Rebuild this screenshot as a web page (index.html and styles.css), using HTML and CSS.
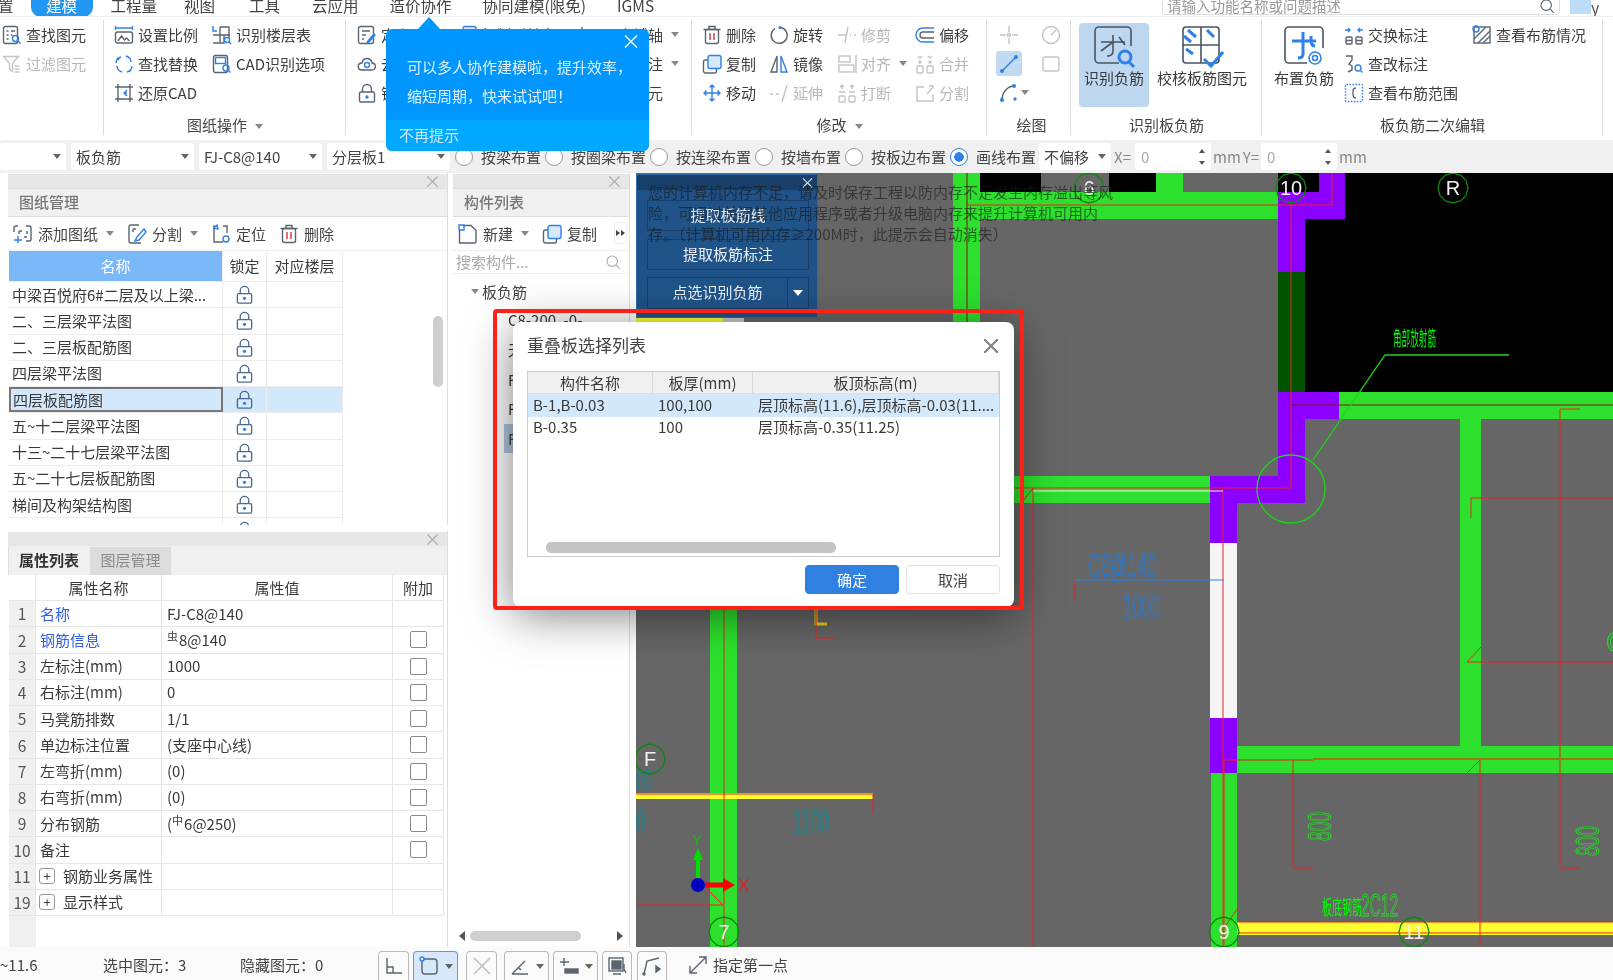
FILE: index.html
```html
<!DOCTYPE html>
<html lang="zh-CN">
<head>
<meta charset="utf-8">
<title>重叠板选择列表</title>
<link rel="stylesheet" href="styles.css">
</head>
<body>
<svg class="defs" width="0" height="0" aria-hidden="true">
  <symbol id="find" viewBox="0 0 20 20"><rect x="1.500" y="1.500" width="14" height="17" rx="2"/><path d="M4.500 6h2M9 6h4M4.500 10h2M9 10h1.500M4.500 14h2"/><circle class="bl" cx="13.500" cy="13.500" r="3"/><path class="bl" d="M16 16l2.500 2.500"/></symbol>
  <symbol id="filter" viewBox="0 0 20 20"><path d="M1.500 2.500h15l-6 7v8l-3-2v-6z"/><path d="M12.500 12h5M12.500 15h5M12.500 18h5"/></symbol>
  <symbol id="scale" viewBox="0 0 20 20"><path class="bl" d="M1.500 3h17M1.500 1v4M18.500 1v4"/><rect x="1.500" y="7" width="17" height="11" rx="2"/><path d="M4 16l3.500-5 3 4 2-2 3 3"/></symbol>
  <symbol id="floor" viewBox="0 0 20 20"><path d="M8 2h9v11M8 2v16M1 10h17M1 18h11V10"/><path class="bl" d="M1 1v5h4"/><circle class="bl" cx="15" cy="15" r="2.500"/><path class="bl" d="M17 17l2 2"/></symbol>
  <symbol id="swap" viewBox="0 0 20 20"><path class="bl" d="M3 4l2 2M2 9c0-3 2-5 5-6M12 2c3 1 5 3 5 6M3 12c0 3 2 5 5 6M13 18c3-1 5-3 5-6M17 16l-2 2"/></symbol>
  <symbol id="cad" viewBox="0 0 20 20"><rect x="1.500" y="1.500" width="14" height="17" rx="2"/><rect class="bl" x="3.500" y="3.500" width="10" height="6"/><circle class="bl" cx="14" cy="14" r="3"/><path class="bl" d="M16 16l2.500 2.500"/></symbol>
  <symbol id="crop" viewBox="0 0 20 20"><path d="M4 1v18M16 1v18M1 4h18M1 16h18"/><path class="bl" d="M13 7l-3 3 3 3M10 10h3"/></symbol>
  <symbol id="def" viewBox="0 0 20 20"><rect x="1.500" y="1.500" width="15" height="17" rx="2"/><path d="M5 6h8M5 10h4M5 14h2"/><path class="bl" d="M17 9l-6 7-1 2 2-1 6-7z"/></symbol>
  <symbol id="cloud" viewBox="0 0 20 20"><path d="M5 16c-5 0-5-7 0-7 1-6 9-6 10 0 4 0 5 7 0 7z"/><circle class="bl" cx="10" cy="11" r="2.500"/></symbol>
  <symbol id="lock" viewBox="0 0 20 20"><path d="M5.500 9V6a4.500 4.500 0 0 1 9 0v3"/><rect x="2.500" y="9" width="15" height="10" rx="1.500"/><circle class="fb" cx="10" cy="14" r="1.700"/></symbol>
  <symbol id="del" viewBox="0 0 20 20"><rect x="3.500" y="4.500" width="13" height="14" rx="2"/><path d="M1.500 4.500h17M7 4.500V1.500h6v3"/><path class="rd" d="M8 8v7M12 8v7"/></symbol>
  <symbol id="copy" viewBox="0 0 20 20"><rect x="1.500" y="6" width="13" height="13" rx="2"/><rect class="blf" x="6" y="1.500" width="13" height="13" rx="2"/></symbol>
  <symbol id="move" viewBox="0 0 20 20"><path class="bl" d="M10 2v16M2 10h16M7.500 4.500L10 2l2.500 2.500M7.500 15.500L10 18l2.500-2.500M4.500 7.500L2 10l2.500 2.500M15.500 7.500L18 10l-2.500 2.500"/></symbol>
  <symbol id="rot" viewBox="0 0 20 20"><path d="M12 2.500a8 8 0 1 1-6 1"/><circle class="fb" cx="11" cy="2.500" r="1.500"/></symbol>
  <symbol id="mir" viewBox="0 0 20 20"><path d="M8 2L2 18h6z"/><path class="bl" d="M12 2l6 16h-6z"/></symbol>
  <symbol id="ext" viewBox="0 0 20 20"><path d="M1 11h3M7 11h3M18 2l-5 17"/></symbol>
  <symbol id="trim" viewBox="0 0 20 20"><path d="M1 10h9M13 10h1M17 10h2M11 2L8 18"/></symbol>
  <symbol id="align" viewBox="0 0 20 20"><rect x="2" y="2" width="11" height="6"/><rect x="2" y="11" width="15" height="7"/><path d="M19 1v18"/></symbol>
  <symbol id="brk" viewBox="0 0 20 20"><rect x="2" y="13" width="6" height="6" rx="1"/><rect x="12" y="13" width="6" height="6" rx="1"/><path d="M2 9h6M12 9h6M5 2v4M15 2v4M3 4l2-2 2 2M13 4l2-2 2 2"/></symbol>
  <symbol id="exch" viewBox="0 0 20 20"><rect x="2" y="12" width="6" height="7" rx="1"/><rect x="12" y="12" width="6" height="7" rx="1"/><path d="M2 15.500h6M12 15.500h6"/><path class="bl" d="M1 5h5M4 3l2 2-2 2M19 5h-5M16 3l-2 2 2 2"/></symbol>
  <symbol id="off" viewBox="0 0 20 20"><path class="bl" d="M19 3H8a6.500 6.500 0 0 0 0 14h11"/><path d="M19 7H8a2.500 2.500 0 0 0 0 6h11"/></symbol>
  <symbol id="merge" viewBox="0 0 20 20"><rect x="2" y="12" width="6" height="7" rx="1"/><rect x="12" y="12" width="6" height="7" rx="1"/><circle cx="5" cy="8" r="1"/><circle cx="15" cy="8" r="1"/><path d="M3 2l2 2 2-2M13 2l2 2 2-2"/></symbol>
  <symbol id="split" viewBox="0 0 20 20"><path d="M9 4H2v14h16v-7M12 11l6-7M14 3l5 0"/></symbol>
  <symbol id="point" viewBox="0 0 20 20"><path d="M10 1v6M10 13v6M1 10h6M13 10h6"/><circle cx="10" cy="10" r="1.500"/></symbol>
  <symbol id="circ" viewBox="0 0 20 20"><circle cx="10" cy="10" r="8.500"/><path d="M10 10l5-5"/></symbol>
  <symbol id="line" viewBox="0 0 20 20"><path class="bl" d="M3 17L17 3"/><circle class="fb" cx="3" cy="17" r="2"/><circle class="fb" cx="17" cy="3" r="2"/></symbol>
  <symbol id="rect" viewBox="0 0 20 20"><rect x="2" y="3" width="16" height="14" rx="2"/></symbol>
  <symbol id="arc" viewBox="0 0 20 20"><path d="M3 17C3 9 9 3 15 3"/><circle class="fb" cx="3" cy="17" r="2"/><circle class="fb" cx="15" cy="3" r="2"/><circle class="fb" cx="16" cy="16" r="1.700"/></symbol>
  <symbol id="ident" viewBox="0 0 44 44"><path d="M27 38H7a4 4 0 0 1-4-4V6a4 4 0 0 1 4-4h28a4 4 0 0 1 4 4v15"/><path d="M9 17h24M21 10v16c0 4-2 5-6 5M9 26l12-9M27 12l6 8"/><circle class="bl thick" cx="33" cy="32" r="6"/><path class="bl thick" d="M37 37l5 5"/></symbol>
  <symbol id="check" viewBox="0 0 44 44"><rect x="3" y="2" width="36" height="36" rx="3"/><path d="M21 2v36M3 20h36"/><path class="bl thick" d="M8 5l8 7M4 11l7 6M27 5l7 7M6 24l7 5"/><path class="bl thick" d="M24 34l7 7 12-14"/></symbol>
  <symbol id="place" viewBox="0 0 44 44"><path d="M25 38H7a4 4 0 0 1-4-4V6a4 4 0 0 1 4-4h30a4 4 0 0 1 4 4v17"/><path class="bl thick" d="M10 16h24M21 7v22c0 3-2 4-5 4M29 11c0 6 0 10 4 10"/><circle class="bl" cx="33" cy="33" r="6"/><circle class="bl" cx="33" cy="33" r="2.500"/></symbol>
  <symbol id="range" viewBox="0 0 20 20"><rect class="bl dot" x="1.500" y="1.500" width="17" height="17" rx="1"/><path d="M12 5c-3 0-3 2-3 5s0 5 3 5"/></symbol>
  <symbol id="chg" viewBox="0 0 20 20"><path d="M2 2h6v4l-3 4 3 2v4l-4 2"/><circle class="bl" cx="14" cy="14" r="3"/><path class="bl" d="M16 16l2.500 2.500"/></symbol>
  <symbol id="view" viewBox="0 0 20 20"><rect x="2" y="2" width="16" height="16"/><path d="M2 14L14 2M6 18L18 6M11 18l7-7"/><circle class="bl" cx="4" cy="4" r="3"/></symbol>
  <symbol id="add" viewBox="0 0 20 20"><path d="M5 2H3a2 2 0 0 0-2 2v4M13 2h3a2 2 0 0 1 2 2v11a2 2 0 0 1-2 2h-3M6 7h3M6 7v3M14 7v3M14 13h-3"/><path class="bl" d="M1 16h8M5 12v7"/></symbol>
  <symbol id="cut" viewBox="0 0 20 20"><path d="M12 1H4a2 2 0 0 0-2 2v14a2 2 0 0 0 2 2h10"/><path d="M6 5h3M6 5v3"/><path class="bl" d="M17 5l-7 8-2 4 4-1 7-8z"/></symbol>
  <symbol id="loc" viewBox="0 0 20 20"><path d="M4 2H3v16h9M12 2h4v7"/><path class="bl" d="M3 4l3-3 1 4z"/><circle class="bl" cx="15" cy="15" r="3"/></symbol>
  <symbol id="new" viewBox="0 0 20 20"><path d="M5 1.500h8l5 5v11a1.500 1.500 0 0 1-1.500 1.500h-15V6"/><path class="bl" d="M1 1h5v5H1z"/></symbol>
  <symbol id="srch" viewBox="0 0 20 20"><circle cx="9" cy="9" r="6.500"/><path d="M14 14l4.500 4.500"/></symbol>
  <symbol id="expand" viewBox="0 0 20 20"><path d="M2 18L18 2M11 2h7v7M2 11v7h7"/></symbol>
  <symbol id="ortho" viewBox="0 0 20 20"><path d="M3 2v15h15M3 11h6v6"/></symbol>
  <symbol id="snap" viewBox="0 0 20 20"><rect x="3" y="3" width="15" height="15" rx="3"/><circle class="blf" cx="3" cy="3" r="2"/></symbol>
  <symbol id="cross" viewBox="0 0 20 20"><path d="M2 2l16 16M18 2L2 18"/></symbol>
  <symbol id="angle" viewBox="0 0 20 20"><path d="M2 18h16M2 18L15 5M9 12l2 2"/></symbol>
  <symbol id="dim" viewBox="0 0 20 20"><path d="M1 6h9M5 2v8"/><rect class="fk" x="6" y="13" width="13" height="4"/></symbol>
  <symbol id="disp" viewBox="0 0 20 20"><rect x="2" y="2" width="14" height="13"/><rect class="fk" x="5" y="5" width="9" height="8"/><path d="M6 18h8M17 8v5l2 4"/></symbol>
  <symbol id="poly" viewBox="0 0 20 20"><path d="M2 18L5 5l12-3"/><circle cx="2" cy="18" r="1"/><path class="fk" d="M14 10l4 3-4 3z"/></symbol>
  <symbol id="axis-mark" viewBox="-16 -16 32 32"><polygon class="axm" points="0,-15 7.500,-13 13,-7.500 15,0 13,7.500 7.500,13 0,15 -7.500,13 -13,7.500 -15,0 -13,-7.500 -7.500,-13"/></symbol>
</svg>

<header class="menubar">
  <span class="mi m0">置</span><span class="mi pill">建模</span><span class="mi m2">工程量</span><span class="mi m3">视图</span><span class="mi m4">工具</span><span class="mi m5">云应用</span><span class="mi m6">造价协作</span><span class="mi m7">协同建模(限免)</span><span class="mi m8">IGMS</span>
  <div class="searchbox"><span>请输入功能名称或问题描述</span><svg class="ic s16"><use href="#srch"/></svg></div>
  <span class="userbox"><i class="userflag"></i>y</span>
</header>

<section class="ribbon">
  <div class="grp g1">
    <div class="gbody">
      <div class="item"><svg class="ic"><use href="#find"/></svg>查找图元</div>
      <div class="item off"><svg class="ic"><use href="#filter"/></svg>过滤图元</div>
    </div>
  </div>
  <div class="grp g2">
    <div class="gbody">
      <div class="item"><svg class="ic"><use href="#scale"/></svg>设置比例</div>
      <div class="item"><svg class="ic"><use href="#swap"/></svg>查找替换</div>
      <div class="item"><svg class="ic"><use href="#crop"/></svg>还原CAD</div>
      <div class="item"><svg class="ic"><use href="#floor"/></svg>识别楼层表</div>
      <div class="item"><svg class="ic"><use href="#cad"/></svg>CAD识别选项</div>
    </div>
    <div class="glabel">图纸操作<i class="caret"></i></div>
  </div>
  <div class="grp g3">
    <div class="gbody">
      <div class="item"><svg class="ic"><use href="#def"/></svg>定义</div>
      <div class="item"><svg class="ic"><use href="#cloud"/></svg>云检查</div>
      <div class="item"><svg class="ic"><use href="#lock"/></svg>锁定</div>
      <div class="item"><svg class="ic"><use href="#copy"/></svg>复制到其它层</div>
      <div class="item"><svg class="ic"><use href="#align"/></svg>自动平齐板</div>
      <div class="item"><svg class="ic"><use href="#filter"/></svg>图元过滤</div>
      <div class="item"><svg class="ic"><use href="#ortho"/></svg>两点辅轴<i class="caret"></i></div>
      <div class="item"><svg class="ic"><use href="#dim"/></svg>长度标注<i class="caret"></i></div>
      <div class="item"><svg class="ic"><use href="#disp"/></svg>存盘图元</div>
    </div>
    <div class="glabel">通用操作<i class="caret"></i></div>
  </div>
  <div class="grp g4">
    <div class="gbody">
      <div class="item"><svg class="ic"><use href="#del"/></svg>删除</div>
      <div class="item"><svg class="ic"><use href="#copy"/></svg>复制</div>
      <div class="item"><svg class="ic"><use href="#move"/></svg>移动</div>
      <div class="item"><svg class="ic"><use href="#rot"/></svg>旋转</div>
      <div class="item"><svg class="ic"><use href="#mir"/></svg>镜像</div>
      <div class="item off"><svg class="ic"><use href="#ext"/></svg>延伸</div>
      <div class="item off"><svg class="ic"><use href="#trim"/></svg>修剪</div>
      <div class="item off"><svg class="ic"><use href="#align"/></svg>对齐<i class="caret"></i></div>
      <div class="item off"><svg class="ic"><use href="#brk"/></svg>打断</div>
      <div class="item"><svg class="ic"><use href="#off"/></svg>偏移</div>
      <div class="item off"><svg class="ic"><use href="#merge"/></svg>合并</div>
      <div class="item off"><svg class="ic"><use href="#split"/></svg>分割</div>
    </div>
    <div class="glabel">修改<i class="caret"></i></div>
  </div>
  <div class="grp g5">
    <div class="gbody">
      <div class="item off"><svg class="ic"><use href="#point"/></svg></div>
      <div class="item active"><svg class="ic"><use href="#line"/></svg></div>
      <div class="item"><svg class="ic"><use href="#arc"/></svg><i class="caret"></i></div>
      <div class="item off"><svg class="ic"><use href="#circ"/></svg></div>
      <div class="item off"><svg class="ic"><use href="#rect"/></svg></div>
    </div>
    <div class="glabel">绘图</div>
  </div>
  <div class="grp g6">
    <div class="gbody">
      <div class="bigbtn on"><svg class="ic big"><use href="#ident"/></svg>识别负筋</div>
      <div class="bigbtn wide"><svg class="ic big"><use href="#check"/></svg>校核板筋图元</div>
    </div>
    <div class="glabel">识别板负筋</div>
  </div>
  <div class="grp g7">
    <div class="gbody">
      <div class="bigbtn place"><svg class="ic big"><use href="#place"/></svg>布置负筋</div>
      <div class="col2">
        <div class="item"><svg class="ic"><use href="#exch"/></svg>交换标注</div>
        <div class="item"><svg class="ic"><use href="#chg"/></svg>查改标注</div>
        <div class="item"><svg class="ic"><use href="#range"/></svg>查看布筋范围</div>
      </div>
      <div class="col3">
        <div class="item"><svg class="ic"><use href="#view"/></svg>查看布筋情况</div>
      </div>
    </div>
    <div class="glabel">板负筋二次编辑</div>
  </div>
</section>

<section class="optbar">
  <div class="sel w66"><span></span><i class="caret dark"></i></div>
  <div class="sel w123"><span>板负筋</span><i class="caret dark"></i></div>
  <div class="sel w123"><span>FJ-C8@140</span><i class="caret dark"></i></div>
  <div class="sel w123"><span>分层板1</span><i class="caret dark"></i></div>
  <div class="radios">
    <label class="radio"><i class="dot"></i>按梁布置</label>
    <label class="radio"><i class="dot"></i>按圈梁布置</label>
    <label class="radio"><i class="dot"></i>按连梁布置</label>
    <label class="radio"><i class="dot"></i>按墙布置</label>
    <label class="radio"><i class="dot"></i>按板边布置</label>
    <label class="radio"><i class="dot on"></i>画线布置</label>
  </div>
  <div class="sel w72"><span>不偏移</span><i class="caret dark"></i></div>
  <span class="coord">X=</span>
  <div class="spin"><span>0</span><b class="arrows"><i class="up"></i><i class="down"></i></b></div>
  <span class="coord">mm</span>
  <span class="coord yl">Y=</span>
  <div class="spin sp2"><span>0</span><b class="arrows"><i class="up"></i><i class="down"></i></b></div>
  <span class="coord">mm</span>
</section>

<main class="main">
  <div class="leftcol">
    <section class="panel p1">
      <div class="pbar"><span class="pclose">×</span></div>
      <div class="ptitle">图纸管理</div>
      <div class="tools">
        <span class="tool"><svg class="ic"><use href="#add"/></svg>添加图纸<i class="caret"></i></span>
        <span class="tool"><svg class="ic"><use href="#cut"/></svg>分割<i class="caret"></i></span>
        <span class="tool"><svg class="ic"><use href="#loc"/></svg>定位</span>
        <span class="tool"><svg class="ic"><use href="#del"/></svg>删除</span>
      </div>
      <div class="dwg">
        <div class="drow head"><div class="namehead">名称</div><div>锁定</div><div>对应楼层</div></div>
        <div class="drow"><div class="dn">中梁百悦府6#二层及以上梁...</div><div class="lk"><svg class="ic lock"><use href="#lock"/></svg></div><div></div></div>
        <div class="drow"><div class="dn">二、三层梁平法图</div><div class="lk"><svg class="ic lock"><use href="#lock"/></svg></div><div></div></div>
        <div class="drow"><div class="dn">二、三层板配筋图</div><div class="lk"><svg class="ic lock"><use href="#lock"/></svg></div><div></div></div>
        <div class="drow"><div class="dn">四层梁平法图</div><div class="lk"><svg class="ic lock"><use href="#lock"/></svg></div><div></div></div>
        <div class="drow cur"><div class="dn">四层板配筋图</div><div class="lk"><svg class="ic lock"><use href="#lock"/></svg></div><div></div></div>
        <div class="drow"><div class="dn">五~十二层梁平法图</div><div class="lk"><svg class="ic lock"><use href="#lock"/></svg></div><div></div></div>
        <div class="drow"><div class="dn">十三~二十七层梁平法图</div><div class="lk"><svg class="ic lock"><use href="#lock"/></svg></div><div></div></div>
        <div class="drow"><div class="dn">五~二十七层板配筋图</div><div class="lk"><svg class="ic lock"><use href="#lock"/></svg></div><div></div></div>
        <div class="drow"><div class="dn">梯间及构架结构图</div><div class="lk"><svg class="ic lock"><use href="#lock"/></svg></div><div></div></div>
        <div class="drow"><div class="dn"></div><div class="lk"><svg class="ic lock"><use href="#lock"/></svg></div><div></div></div>
      </div>
      <i class="vscroll"></i>
    </section>
    <section class="panel p2">
      <div class="pbar"><span class="pclose">×</span></div>
      <div class="tabs"><span class="tab on">属性列表</span><span class="tab">图层管理</span></div>
      <div class="props">
        <div class="prow phead"><div></div><div>属性名称</div><div>属性值</div><div>附加</div></div>
        <div class="prow"><div class="no">1</div><div class="link">名称</div><div>FJ-C8@140</div><div></div></div>
        <div class="prow"><div class="no">2</div><div class="link">钢筋信息</div><div><span class="rebar">虫</span>8@140</div><div><i class="chk"></i></div></div>
        <div class="prow"><div class="no">3</div><div>左标注(mm)</div><div>1000</div><div><i class="chk"></i></div></div>
        <div class="prow"><div class="no">4</div><div>右标注(mm)</div><div>0</div><div><i class="chk"></i></div></div>
        <div class="prow"><div class="no">5</div><div>马凳筋排数</div><div>1/1</div><div><i class="chk"></i></div></div>
        <div class="prow"><div class="no">6</div><div>单边标注位置</div><div>(支座中心线)</div><div><i class="chk"></i></div></div>
        <div class="prow"><div class="no">7</div><div>左弯折(mm)</div><div>(0)</div><div><i class="chk"></i></div></div>
        <div class="prow"><div class="no">8</div><div>右弯折(mm)</div><div>(0)</div><div><i class="chk"></i></div></div>
        <div class="prow"><div class="no">9</div><div>分布钢筋</div><div>(<span class="rebar">中</span>6@250)</div><div><i class="chk"></i></div></div>
        <div class="prow"><div class="no">10</div><div>备注</div><div></div><div><i class="chk"></i></div></div>
        <div class="prow"><div class="no">11</div><div><i class="plus">+</i>钢筋业务属性</div><div></div><div></div></div>
        <div class="prow"><div class="no">19</div><div><i class="plus">+</i>显示样式</div><div></div><div></div></div>
        <div class="pfill"><i></i></div>
      </div>
    </section>
  </div>

  <section class="panel midcol">
    <div class="pbar"><span class="pclose">×</span></div>
    <div class="ptitle">构件列表</div>
    <div class="tools mid">
      <span class="tool"><svg class="ic"><use href="#new"/></svg>新建<i class="caret"></i></span>
      <span class="tool"><svg class="ic"><use href="#copy"/></svg>复制</span>
      <span class="more"><i></i><i></i></span>
    </div>
    <div class="searchrow"><span>搜索构件...</span><svg class="ic s16"><use href="#srch"/></svg></div>
    <div class="tree">
      <div class="troot"><i class="caret"></i>板负筋</div>
      <div class="tleaf">C8-200, -0-</div>
      <div class="tleaf gapped">无</div>
      <div class="tleaf gapped">FJ-C8@100</div>
      <div class="tleaf gapped">FJ-C8@120</div>
      <div class="tleaf gapped sel-leaf">FJ-C8@140</div>
    </div>
    <div class="hbar"><i class="tri l"></i><i class="thumb"></i><i class="tri r"></i></div>
  </section>

  <section class="canvas">
    <svg class="cad" viewBox="636 173 977 774" width="977" height="774" aria-label="CAD 图纸">
      <g class="blk">
        <rect x="980" y="173" width="61" height="19"/><rect x="1109" y="173" width="47" height="19"/><rect x="1278" y="173" width="41" height="19"/>
        <rect x="1345" y="173" width="268" height="46"/><rect x="1305" y="219" width="308" height="173"/>
      </g>
      <g class="grn">
        <rect x="980" y="192" width="298" height="27"/><rect x="1156" y="173" width="27" height="19"/><rect x="953" y="173" width="27" height="150"/>
        <rect x="900" y="476" width="310" height="27"/><rect x="710" y="600" width="27" height="347"/>
        <rect x="1339" y="392" width="274" height="27"/><rect x="1460" y="419" width="21" height="327"/><rect x="1237" y="746" width="376" height="27"/><rect x="1211" y="773" width="26" height="174"/>
      </g>
      <rect class="dkg" x="1278" y="272" width="27" height="120"/>
      <path class="pur" d="M1319 173h26v46h-40v53h-27v-80h41zM1278 392h61v27h-34v84h-68v40h-27v-67h68v-84z"/>
      <rect class="wht" x="1210" y="543" width="27" height="175"/>
      <rect class="pur" x="1210" y="718" width="27" height="55"/>
      <rect class="yel" x="636" y="318" width="87" height="5"/><rect class="lgy" x="723" y="318" width="21" height="5"/>
      <rect class="yel" x="636" y="793" width="237" height="6"/><rect class="yel" x="1237" y="922" width="376" height="13"/><path class="yline" d="M816 600v24h11"/>
      <g class="red">
        <path d="M967 205h365V173M1291 205v283H900M1223 488v460M1033 488v460M1033 488l-11 14M1075 581v18"/>
        <path d="M816 600v38h20M636 794h237v19M724 600v347M636 905h87l-15-15M1224 760v187M1224 760h89M1293 760v108h20M1560 409v459h20M1560 409h20M1471 498h142M1471 498v20M1467 662h146M1467 662l14-15M1480 760v187M1480 760l-15 15M1237 922h376M1237 933h376M1226 925l12-17"/>
      </g>
      <path class="dkred" d="M1291 405h322M967 173v150"/><path class="brn" d="M1313 759h300"/>
      <path class="wline" d="M1033 491h190"/>
      <path class="bline" d="M1075 580h149"/>
      <g class="thin">
        <circle cx="1291" cy="489" r="34"/><path d="M1313 460l72-105h124"/>
      </g>
      <text class="gt" x="1393" y="346" textLength="43" lengthAdjust="spacingAndGlyphs">角部放射筋</text>
      <text class="gt" x="1322" y="915" textLength="40" lengthAdjust="spacingAndGlyphs">板底钢筋</text>
      <text class="cadt gout" x="1361" y="916" font-size="32" textLength="37" lengthAdjust="spacingAndGlyphs">2C12</text>
      <text class="cadt bout" x="1088" y="577" font-size="34" textLength="68" lengthAdjust="spacingAndGlyphs">C8@140</text>
      <text class="cadt bout" x="1123" y="618" font-size="33" textLength="37" lengthAdjust="spacingAndGlyphs">1000</text>
      <text class="cadt tout" x="793" y="832" font-size="32" textLength="36" lengthAdjust="spacingAndGlyphs">1100</text>
      <text class="cadt tout" x="636" y="832" font-size="32" textLength="9" lengthAdjust="spacingAndGlyphs">0</text>
      <text class="cadt tout" x="636" y="790" font-size="30" textLength="16" lengthAdjust="spacingAndGlyphs">00</text>
      <text class="cadt gout" transform="translate(1331 841) rotate(-90)" font-size="33" textLength="29" lengthAdjust="spacingAndGlyphs">800</text>
      <text class="cadt gout" transform="translate(1599 856) rotate(-90)" font-size="33" textLength="30" lengthAdjust="spacingAndGlyphs">800</text>
      <text class="cadt gout" x="1606" y="652" font-size="30">C</text>
      <g class="axis">
        <use href="#axis-mark" x="1073" y="172" width="32" height="32"/><text x="1089" y="195">6</text>
        <use href="#axis-mark" x="1275" y="172" width="32" height="32"/><text x="1291" y="195">10</text>
        <use href="#axis-mark" x="1437" y="172" width="32" height="32"/><text x="1453" y="195">R</text>
        <use href="#axis-mark" x="634" y="743" width="32" height="32"/><text x="650" y="766">F</text>
        <use href="#axis-mark" x="708" y="916" width="32" height="32"/><text x="724" y="939">7</text>
        <use href="#axis-mark" x="1208" y="916" width="32" height="32"/><text x="1224" y="939">9</text>
        <use href="#axis-mark" x="1398" y="916" width="32" height="32"/><text x="1414" y="939">11</text>
      </g>
      <path class="ax-g" d="M698 878v-22"/><path class="ax-gf" d="M693 860l5-12 5 12z"/>
      <text class="ax-gt" x="692" y="845">Y</text>
      <path class="ax-r" d="M705 885h20"/><path class="ax-rf" d="M723 878l12 7-12 7z"/>
      <text class="ax-rt" x="738" y="891">X</text>
      <ellipse class="ax-b" cx="698" cy="885" rx="7" ry="7"/>
    </svg>
  </section>
</main>

<footer class="status">
  <span class="st1">~11.6</span><span class="st2">选中图元：3</span><span class="st3">隐藏图元：0</span>
  <span class="sb sb1"><svg class="ic s20"><use href="#ortho"/></svg></span>
  <span class="sb sb2 on"><svg class="ic s20"><use href="#snap"/></svg><i class="caret dark"></i></span>
  <span class="sb sb3"><svg class="ic s20 lite"><use href="#cross"/></svg></span>
  <span class="sb sb4"><svg class="ic s20"><use href="#angle"/></svg><i class="caret dark"></i></span>
  <span class="sb sb5"><svg class="ic s20"><use href="#dim"/></svg><i class="caret dark"></i></span>
  <span class="sb sb6"><svg class="ic s20"><use href="#disp"/></svg></span>
  <span class="sb sb7"><svg class="ic s20"><use href="#poly"/></svg></span>
  <svg class="ic s20 exp"><use href="#expand"/></svg><span class="st4">指定第一点</span>
</footer>

<aside class="fpanel">
  <div class="fhead"><span>×</span></div>
  <div class="fbtn">提取板筋线</div>
  <div class="fbtn">提取板筋标注</div>
  <div class="fbtn split"><span>点选识别负筋</span><i></i></div>
</aside>
<p class="memwarn">您的计算机内存不足，请及时保存工程以防内存不足发生内存溢出等风<br>险，可通过关闭其他应用程序或者升级电脑内存来提升计算机可用内<br>存。（计算机可用内存≥200M时，此提示会自动消失）</p>

<aside class="tip">
  <i class="tiparrow"></i>
  <span class="tipclose">×</span>
  <p class="tiptext">可以多人协作建模啦，提升效率，<br>缩短周期，快来试试吧！</p>
  <div class="tipfoot">不再提示</div>
</aside>

<div class="dialog" role="dialog">
  <div class="dhead"><span>重叠板选择列表</span><b class="dclose"></b></div>
  <div class="dtable">
    <div class="dtrow dth"><div>构件名称</div><div>板厚(mm)</div><div>板顶标高(m)</div></div>
    <div class="dtrow act"><div>B-1,B-0.03</div><div>100,100</div><div>层顶标高(11.6),层顶标高-0.03(11....</div></div>
    <div class="dtrow"><div>B-0.35</div><div>100</div><div>层顶标高-0.35(11.25)</div></div>
    <i class="dscroll"></i>
  </div>
  <div class="dfoot"><button class="btn pri">确定</button><button class="btn">取消</button></div>
</div>
<div class="redmark"></div>
</body>
</html>
```
FILE: styles.css
```css
*{box-sizing:border-box}
html,body{margin:0;padding:0}
body{width:1613px;height:980px;overflow:hidden;position:relative;background:#fff;color:#3a3a3a;font:15px/1.2 "Noto Sans CJK SC","Noto Sans",sans-serif;filter:blur(.35px)}
i{font-style:normal}
.defs{position:absolute}
.ic{width:20px;height:20px;flex:none;fill:none;stroke:#5a6470;stroke-width:1.4}
.ic .bl,.bl{stroke:#2f80e8}
.thick{stroke-width:3}
.fb{fill:#2f80e8;stroke:none}
.fk{fill:#5a6470}
.rd{stroke:#e0303a}
.blf{stroke:#2f80e8;fill:#d8e8fb}
.dot{stroke-dasharray:1.5 1.5}
.s16{width:16px;height:16px}
.s20{width:20px;height:20px}
.caret{display:inline-block;width:0;height:0;border:4px solid transparent;border-top:5px solid #888;border-bottom:0;margin-left:8px;vertical-align:middle}
.caret.dark{border-top-color:#666}

/* menu */
.menubar{height:17px;display:flex;align-items:flex-start;overflow:hidden;background:#fff;border-bottom:1px solid #eee;position:relative}
.mi{font-size:15.5px;line-height:16px;margin-top:-3px;white-space:nowrap;color:#444}
.m0{margin-left:-2px}
.pill{margin:-4px 0 0 17px;width:62px;height:21px;line-height:19px;border-radius:0 0 10px 10px;background:#2196f3;color:#fff;text-align:center}
.m2{margin-left:18px}.m3{margin-left:27px}.m4{margin-left:34px}.m5{margin-left:32px}.m6{margin-left:31px}.m7{margin-left:31px}.m8{margin-left:31px}
.searchbox{margin-left:auto;margin-top:-3px;width:398px;height:18px;border:1px solid #ddd;border-radius:3px;display:flex;justify-content:space-between;align-items:center;padding:0 4px;font-size:14.5px;color:#999}
.userbox{width:53px;padding-left:10px;display:flex;font-size:16px;line-height:14px;color:#555}
.userflag{width:21px;height:14px;background:#bcdcf8}

/* ribbon */
.ribbon{height:123px;display:flex;background:#fff}
.grp{display:flex;flex-direction:column;flex:none;position:relative}
.grp::after{content:"";position:absolute;right:0;top:3px;height:115px;width:1px;background:#dcdcdc}
.gbody{height:98px;padding-top:3px;display:grid;grid-auto-flow:column;grid-template-rows:repeat(3,29px)}
.glabel{height:20px;line-height:20px;text-align:center;font-size:15px;color:#444}
.item{display:flex;align-items:center;gap:4px;white-space:nowrap;height:29px;color:#3f3f3f}
.item .caret{margin-left:4px}
.off{color:#b8b8b8}
.off .ic{stroke:#c4c4c4}
.off .ic .bl{stroke:#c4c4c4}
.g1{width:104px;padding-left:2px}
.g2{width:242px}.g2 .gbody{padding-left:10px;grid-template-columns:98px auto}
.g3{width:346px}.g3 .gbody{padding-left:11px;grid-template-columns:100px 122px auto}
.g4{width:295px}.g4 .gbody{padding-left:10px;grid-template-columns:67px 68px 78px auto}
.g5{width:84px}.g5 .gbody{padding-left:9px;grid-template-columns:42px auto}
.g5 .glabel{padding-left:5px}
.g5 .item{width:26px;justify-content:center;gap:0;height:25px;margin-top:2px;border-radius:3px}
.g5 .item .caret{margin-left:2px;flex:none}
.g5 .item:nth-child(3){width:auto;justify-content:flex-start;padding-left:3px}
.g5 .active{background:#c2d9f2}
.g6{width:191px}.g6 .gbody{padding-top:6px;padding-left:8px;display:flex;align-items:flex-start;height:98px}
.g7{width:341px}.g7 .gbody{display:flex;align-items:flex-start;height:98px;padding-top:6px}
.bigbtn{display:flex;flex-direction:column;align-items:center;gap:0;width:70px;height:84px;padding-top:2px;border-radius:4px;white-space:nowrap;line-height:18px}
.bigbtn.on{background:#bed7f1}
.bigbtn.wide{width:90px;margin-left:8px}
.bigbtn.place{margin-left:11px;width:62px}
.big{width:44px;height:44px;stroke-width:1.6;stroke:#4a5562}
.col2{width:128px;margin:-3px 0 0 9px;flex:none}
.col3{margin-top:-3px}

/* option bar */
.optbar{height:33px;background:#f0f0f0;display:flex;align-items:center;gap:5px;overflow:hidden}
.sel{height:27px;background:#fff;border-radius:3px;display:flex;align-items:center;justify-content:space-between;padding:0 5px;flex:none;font-size:15px;color:#444}
.sel .caret{margin:0}
.w66{width:66px}.w123{width:123px}.w72{width:72px;margin-left:-2px}
.radios{display:flex;gap:4px;flex:none}
.radio{display:flex;align-items:center;gap:8px;white-space:nowrap;color:#444}
.radio .dot{width:18px;height:18px;border:1px solid #999;border-radius:50%;background:#fff;display:block;flex:none;stroke-dasharray:none}
.radio .dot.on{border-color:#2f80e8;background:radial-gradient(circle,#2f80e8 0 4.500px,#fff 5px)}
.coord{color:#888;margin-left:-2px;white-space:nowrap}
.coord.yl{margin-left:-3px}
.spin{width:76px;height:27px;background:#fff;border-radius:3px;display:flex;align-items:center;justify-content:space-between;padding:0 6px;color:#aaa;flex:none;margin:0 -1px}
.spin.sp2{margin-left:-3px}
.arrows{display:flex;flex-direction:column;gap:8px}
.arrows i{display:block;width:0;height:0;border:3.500px solid transparent}
.arrows .up{border-bottom:4px solid #555;border-top:0}
.arrows .down{border-top:4px solid #555;border-bottom:0}

/* main */
.main{height:774px;display:flex;background:#fff}
.leftcol{width:440px;margin-left:8px;display:flex;flex-direction:column;gap:6px;flex:none}
.panel{background:#fff;position:relative;display:flex;flex-direction:column;overflow:hidden}
.p1{height:352px;border-right:1px solid #ddd}
.p2{height:416px;border-right:1px solid #ddd}
.pbar{height:14px;margin-top:1px;background:#e6e6e6;position:relative;flex:none}
.pclose{position:absolute;right:6px;top:-3px;font-size:17px;line-height:20px;color:#aaa}
.ptitle{height:29px;line-height:25px;background:#f0f0f0;padding-left:11px;color:#777;font-weight:500;flex:none;border-top:1px solid #ddd;border-bottom:1px solid #ddd}
.tools{height:34px;display:flex;align-items:center;gap:13px;padding-left:5px;flex:none;border-bottom:1px solid #eee}
.tool{display:flex;align-items:center;gap:5px;white-space:nowrap;color:#444}
.tool .caret{margin-left:3px}
.dwg{flex:1;overflow:hidden;padding-left:1px}
.drow{display:grid;grid-template-columns:214px 44px 76px;height:26.250px;width:334px;border-bottom:1.500px solid #ececec}
.drow>div{display:flex;align-items:center;border-right:1.500px solid #ececec;white-space:nowrap;overflow:hidden}
.drow .dn{padding-left:3px}
.drow.head{height:31px;text-align:center}
.drow.head>div{justify-content:center}
.drow .namehead{background:#7ab8f8;color:#fff}
.lk{justify-content:center}
.lock{width:19px;height:19px;stroke:#4a6a8c}
.cur>div{background:#d4e8fb}
.cur .dn{border:2px solid #777;padding-left:2px}
.vscroll{position:absolute;left:425px;top:143px;width:10px;height:71px;border-radius:5px;background:#cfcfcf}
.tabs{height:29px;background:#f0f0f0;display:flex;align-items:flex-start;flex:none;padding-top:1px;gap:1px;line-height:26px}
.tab{width:81px;height:28px;line-height:26px;text-align:center;background:#dcdcdc;color:#8a8a8a}
.tab.on{background:#f0f0f0;color:#333;font-weight:700;border-left:1px solid #ddd}
.props{flex:1;display:flex;flex-direction:column;padding-left:1px}
.prow{display:grid;grid-template-columns:27px 126px 231px 51px;height:26.250px;border-bottom:1.500px solid #e6e6e6;width:435px;flex:none}
.prow>div{display:flex;align-items:center;padding-left:4px;border-right:1.500px solid #e6e6e6;white-space:nowrap}
.prow>div:nth-child(3){padding-left:5px}
.prow>div:nth-child(4){justify-content:center;padding-left:0}
.prow.phead{height:26px}
.prow.phead>div{justify-content:center;padding-left:0}
.prow .no{background:#f0f0f0;justify-content:center;padding:0;font-size:15.500px;color:#555}
.phead>div:first-child{background:#fff}
.link{color:#2f5fe8}
.rebar{font-size:11px;position:relative;top:-3px;margin-right:1px}
.chk{width:17px;height:17px;border:1.500px solid #8a8a8a;border-radius:2px;background:#fff}
.plus{width:16px;height:16px;border:1px solid #999;border-radius:3px;font-size:13px;line-height:13px;text-align:center;margin-right:8px;flex:none;margin-left:-1px}
.pfill{flex:1;display:flex}
.pfill i{width:27px;background:#f0f0f0}

/* middle */
.midcol{width:177px;margin-left:5px;height:774px;flex:none;border-right:1px solid #ddd}
.tools.mid{gap:13px;padding-left:5px;position:relative}
.more{position:absolute;right:2px;top:5px;width:13px;height:22px;border:1px solid #eee;border-radius:3px;display:flex;align-items:center;justify-content:center;gap:1px}
.more i{width:0;height:0;border:3px solid transparent;border-left:4px solid #444;border-right:0}
.searchrow{height:24px;display:flex;align-items:center;justify-content:space-between;padding:0 8px 0 3px;color:#aaa;border-bottom:1px solid #eee;flex:none;margin-top:-1px}
.searchrow .ic{stroke:#aaa}
.tree{flex:1;overflow:hidden;padding-top:5px}
.troot{padding-left:6px;height:25px;display:flex;align-items:center;gap:3px;color:#444}
.troot .caret{margin-left:12px}
.tleaf{padding-left:55px;height:22px;margin-top:5px;white-space:nowrap;line-height:22px}
.tleaf.gapped{height:29.500px;line-height:29.500px;margin-top:0}
.tleaf.gapped:nth-child(3){margin-top:4px}
.sel-leaf{background:linear-gradient(90deg,transparent 51px,#b0c8e0 51px)}
.hbar{height:18px;margin-bottom:2px;display:flex;align-items:center;gap:5px;padding:0 6px;flex:none}
.thumb{width:111px;height:10px;border-radius:5px;background:#cfcfcf}
.tri{width:0;height:0;border:5px solid transparent}
.tri.l{border-right:6px solid #555;border-left:0}
.tri.r{border-left:6px solid #555;border-right:0;margin-left:auto}

/* canvas */
.canvas{flex:none;width:977px;height:774px;margin-left:6px;background:#666;overflow:hidden}
.cad{display:block}
.blk rect{fill:#000}
.grn rect{fill:#2de02d}
.dkg{fill:#005400}
.pur{fill:#8c00ff}
.wht{fill:#f5f5f5}
.yel{fill:#ffff2d}
.lgy{fill:#ccc}
.yline{fill:none;stroke:#e6d520;stroke-width:3}
.red{fill:none;stroke:#ee2222;stroke-width:1}
.dkred{stroke:#8a1010;stroke-width:1;fill:none}
.brn{stroke:#9a7a10;stroke-width:2;fill:none}
.wline{stroke:#f0f0f0;stroke-width:1;fill:none}
.bline{stroke:#2f80e8;stroke-width:1;fill:none}
.thin{fill:none;stroke:#18d818;stroke-width:1.300}
.gt{font-family:"Noto Sans CJK SC",sans-serif;font-size:20px;fill:#00ff00}
.cadt{font-family:"Liberation Sans",sans-serif}
.gout{fill:none;stroke:#22e022;stroke-width:1}
.bout{fill:none;stroke:#1f7be0;stroke-width:1}
.tout{fill:none;stroke:#0b8a9a;stroke-width:1}
.axm{fill:none;stroke:#0a8a0a;stroke-width:1.300}
.axis text{font-family:"Liberation Sans",sans-serif;font-size:20px;fill:#f2f2f2;text-anchor:middle}
.ax-g{stroke:#00e000;stroke-width:4;fill:none}
.ax-gf{fill:#00e000}
.ax-gt{font:15px "Liberation Sans",sans-serif;fill:#11c011}
.ax-r{stroke:#ff0000;stroke-width:5;fill:none}
.ax-rf{fill:#ff0000}
.ax-rt{font:17px "Liberation Sans",sans-serif;fill:#e02020}
.ax-b{fill:#0000c0}

/* status */
.status{height:33px;background:#fafafa;display:flex;align-items:center;white-space:nowrap;color:#444;padding-top:2px}
.st1{width:103px}.st2{width:137px}.st3{width:138px}
.sb{height:29px;margin-top:2px;border:1.500px solid #bbb;border-bottom:0;border-radius:4px 4px 0 0;display:flex;align-items:center;justify-content:center;gap:6px;flex:none}
.sb .caret{margin:0}
.sb1{width:31px}
.sb2{width:45px;margin-left:4px}
.sb2.on{background:#d8e8fb;border-color:#5a9ae8}
.sb3{width:31px;margin-left:8px}
.sb4{width:45px;margin-left:7px}
.sb5{width:45px;margin-left:4px}
.sb6{width:30px;margin-left:4px}
.sb7{width:30px;margin-left:5px}
.lite{stroke:#bbb}
.exp{margin-left:21px}
.st4{margin-left:5px}

/* overlays */
.fpanel{position:absolute;left:636px;top:174px;width:182px;height:144px;background:#1f5288;border:1px solid #2f6ba5;padding:0 8px 0 10px}
.fhead{height:15px;background:#173f69;margin:0 -8px 10px -10px;color:#dfe8f2;font-size:15px;line-height:14px;text-align:right;padding-right:2px}
.fbtn{height:31px;margin-bottom:8px;border:1px solid #173f69;text-align:center;color:#e8eef5;line-height:27px;font-size:15px;background:#205489}
.fbtn.split{display:flex;height:32px;margin-top:-1px}
.fbtn.split span{flex:1;border-right:1px solid #173f69}
.fbtn.split i{width:20px;position:relative}
.fbtn.split i::after{content:"";position:absolute;left:5px;top:12px;border:5px solid transparent;border-top:6px solid #fff;border-bottom:0}
.memwarn{position:absolute;left:648px;top:181px;margin:0;font-size:15px;line-height:21px;color:rgba(25,25,25,.62);white-space:nowrap}
.tip{position:absolute;left:386px;top:29px;width:263px;height:122px;background:#0096ff;border-radius:6px;color:#dff1ff}
.tiparrow{position:absolute;left:32px;top:-12px;width:0;height:0;border:11px solid transparent;border-top:0;border-bottom:12px solid #0096ff}
.tipclose{position:absolute;right:8px;top:0;font-size:20px;line-height:24px;color:#e8f5ff}
.tiptext{margin:0;padding:23px 0 0 21px;font-size:15px;line-height:29px;height:91px;white-space:nowrap}
.tipfoot{height:31px;background:#00a9ff;border-radius:0 0 6px 6px;padding-left:13px;line-height:29px;font-size:15px;color:#cfeaff}
.dialog{position:absolute;left:513px;top:322px;width:501px;height:285px;background:#fff;border-radius:8px;box-shadow:0 8px 45px rgba(0,0,0,.5);padding:0 14px}
.dhead{height:49px;display:flex;align-items:center;justify-content:space-between;font-size:17px;color:#444;padding-bottom:2px}
.dclose{width:14px;height:14px;position:relative;margin-right:2px;background:linear-gradient(45deg,transparent 46%,#888 46% 54%,transparent 54%),linear-gradient(-45deg,transparent 46%,#888 46% 54%,transparent 54%)}
.dtable{height:186px;border:1px solid #ccc;position:relative;font-size:15px}
.dtrow{display:grid;grid-template-columns:125px 100px auto;height:22.500px;align-items:center;white-space:nowrap;padding-bottom:1px}
.dtrow>div{padding-left:5px;overflow:hidden}
.dtrow.dth{height:22px;background:#f0f0f0;border-bottom:1px solid #ddd;text-align:center;font-size:15px;padding-bottom:0}
.dtrow.dth>div{padding:0;border-right:1.500px solid #d8d8d8;height:100%;line-height:21px}
.dtrow.act{background:#d4e8fb}
.dscroll{position:absolute;left:18px;top:170px;width:290px;height:11px;border-radius:5px;background:#c4c4c4}
.dfoot{display:flex;justify-content:flex-end;gap:7px;margin-top:8px}
.btn{width:94px;height:29px;border:1.500px solid #e2e2e2;border-radius:4px;background:#fff;font:15px "Noto Sans CJK SC",sans-serif;color:#444;padding:0}
.btn.pri{background:#2f80e0;border-color:#2f80e0;color:#fff}
.redmark{position:absolute;left:493px;top:309px;width:531px;height:301px;border:4px solid #ff2018;border-radius:4px;pointer-events:none}
```
